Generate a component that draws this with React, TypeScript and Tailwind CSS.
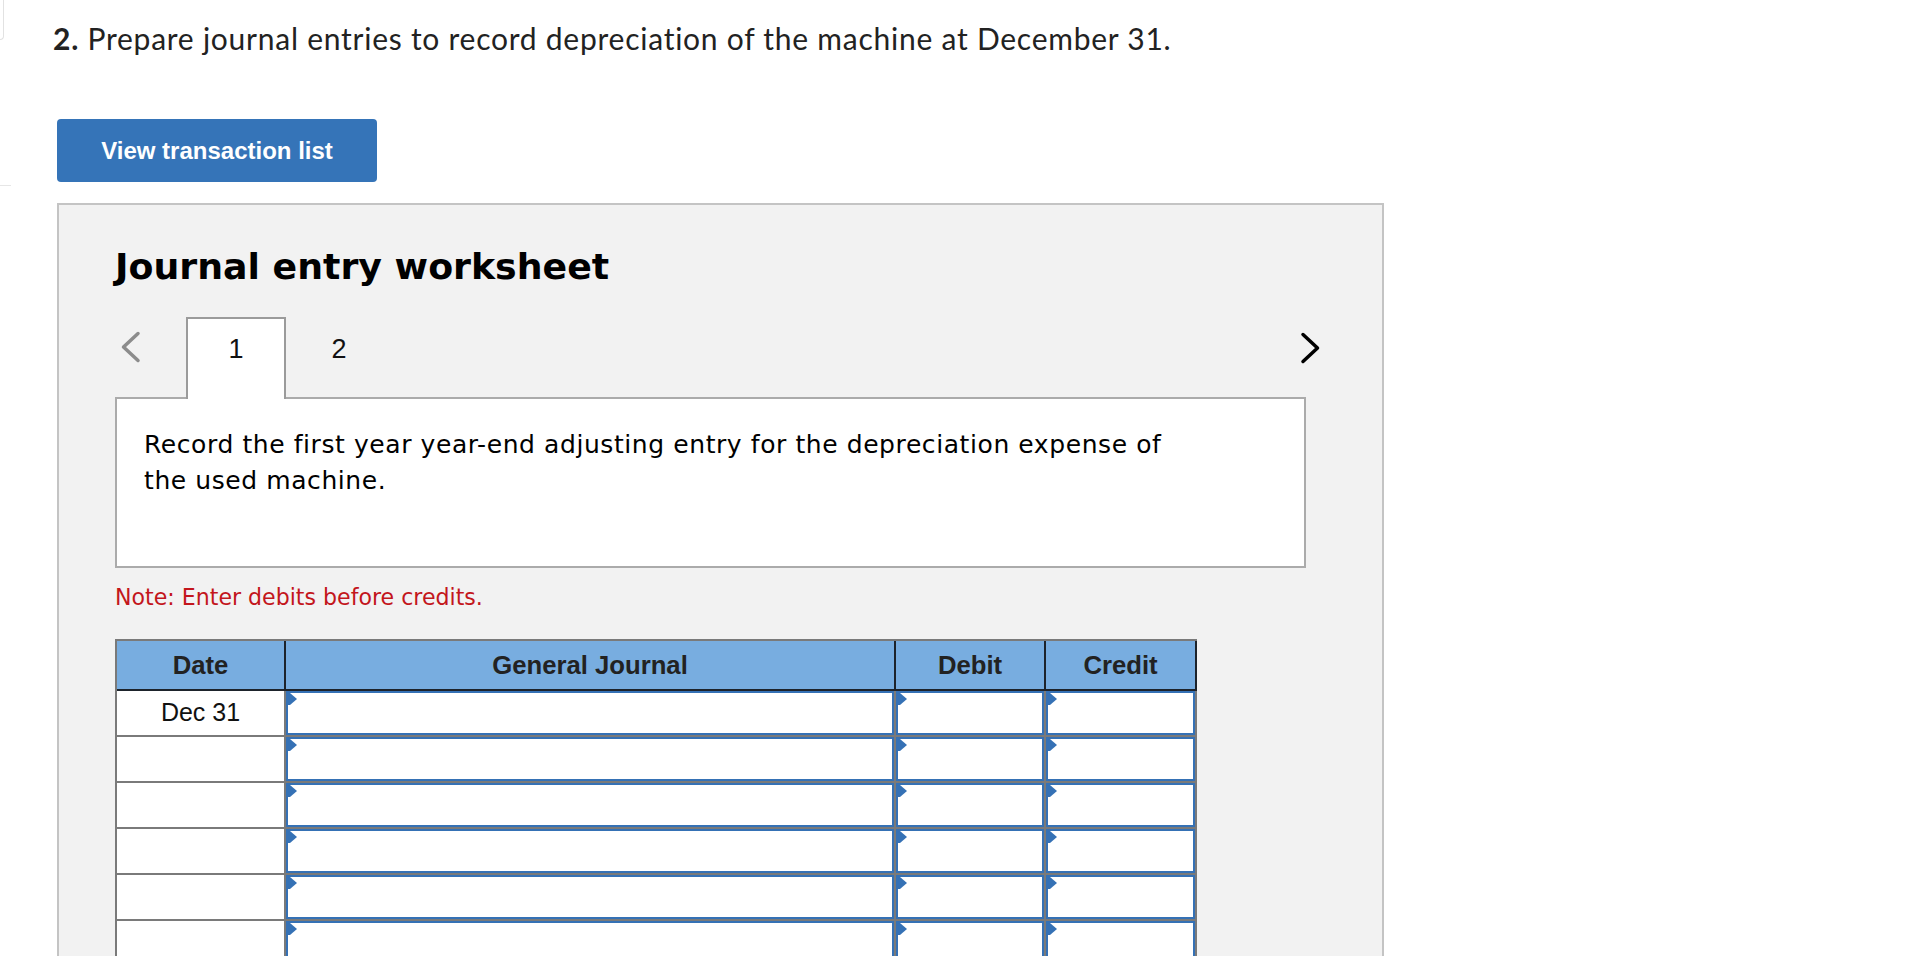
import React from "react";

const rows = ["Dec 31", "", "", "", "", "", "", ""];

function Flag() {
  return (
    <svg className="absolute left-0 top-0" width="9" height="12" viewBox="0 0 9 12">
      <polygon points="0,0 2,0 9,6 2,12 0,12" fill="#3571b5" />
    </svg>
  );
}

function EntryCell({ width }: { width: string }) {
  return (
    <div className={`${width} border-b-2 border-r-2 border-[#7a7a7a]`}>
      <div className="relative h-full border-2 border-[#3571b5] bg-white">
        <Flag />
      </div>
    </div>
  );
}

export default function App() {
  return (
    <div className="relative min-h-screen bg-white pb-10">
      {/* stray edges of the neighbouring panel */}
      <div className="absolute left-0 top-0 h-[40px] w-[4px] rounded-br-[6px] border-b border-r border-[#e2e2e2]" />
      <div className="absolute left-0 top-[185px] h-px w-[11px] bg-[#e6e6e6]" />

      <h1
        className="pl-[53px] pt-[20px] text-[30px] font-normal leading-[36px] tracking-[0.75px] text-[#222]"
        style={{ fontFamily: "Lato, sans-serif" }}
      >
        <span className="font-bold">2.</span> Prepare journal entries to record depreciation of the machine at December 31.
      </h1>

      <button
        className="ml-[57px] mt-[63px] flex h-[63px] w-[320px] items-center justify-center rounded-[4px] bg-[#3574b8] text-[24px] font-bold text-white"
        style={{ fontFamily: "'Liberation Sans', Arial, sans-serif" }}
      >
        View transaction list
      </button>

      <div className="ml-[57px] mt-[21px] w-[1327px] border-2 border-[#c4c4c4] bg-[#f2f2f2] pb-[60px] pl-[56px] pt-[41px]">
        <h2
          className="text-[36.3px] font-bold leading-[42px] text-black"
          style={{ fontFamily: "'DejaVu Sans', Verdana, sans-serif" }}
        >
          Journal entry worksheet
        </h2>

        {/* tabs */}
        <div
          className="mt-[29px] flex w-[1215px] items-start text-[27px] leading-[32px] text-[#111]"
          style={{ fontFamily: "'Liberation Sans', Arial, sans-serif" }}
        >
          <div className="w-[71px] pl-[6px] pt-[14px]">
            <svg width="20" height="32" viewBox="0 0 20 32">
              <path d="M17 2.5 L2.5 16 L17 29.5" fill="none" stroke="#8c8c8c" strokeWidth="3.5" strokeLinecap="round" strokeLinejoin="round" />
            </svg>
          </div>
          <div className="relative z-10 h-[82px] w-[100px] border-2 border-b-0 border-[#9b9b9b] bg-white pt-[14px] text-center">
            1
          </div>
          <div className="w-[106px] pt-[16px] text-center">2</div>
          <div className="flex-1" />
          <div className="mr-[10px] pt-[15px]">
            <svg width="20" height="32" viewBox="0 0 20 32">
              <path d="M3 2.5 L17.5 16 L3 29.5" fill="none" stroke="#000" strokeWidth="3.5" strokeLinecap="round" strokeLinejoin="round" />
            </svg>
          </div>
        </div>

        <div
          className="relative -mt-[2px] h-[171px] w-[1191px] border-2 border-[#ababab] bg-white pl-[27px] pt-[28px]"
          style={{ fontFamily: "'DejaVu Sans', Verdana, sans-serif" }}
        >
          <p className="w-[1035px] text-[25px] leading-[36px] tracking-[0.58px] text-black">
            Record the first year year-end adjusting entry for the depreciation expense of the used machine.
          </p>
        </div>

        <p
          className="mt-[14px] text-[22.1px] leading-[30px] text-[#c3161c]"
          style={{ fontFamily: "'DejaVu Sans', Verdana, sans-serif" }}
        >
          Note: Enter debits before credits.
        </p>

        {/* journal table */}
        <div
          className="mt-[27px] w-[1082px] border-l-2 border-t-2 border-[#7a7a7a]"
          style={{ fontFamily: "'Liberation Sans', Arial, sans-serif" }}
        >
          <div className="flex h-[50px] border-b-2 border-[#1d232b] bg-[#78ade0] text-[25.7px] font-bold text-[#222]">
            <div className="flex w-[169px] items-center justify-center border-r-2 border-[#1d232b]">Date</div>
            <div className="flex w-[610px] items-center justify-center border-r-2 border-[#1d232b]">General Journal</div>
            <div className="flex w-[150px] items-center justify-center border-r-2 border-[#1d232b]">Debit</div>
            <div className="flex w-[151px] items-center justify-center border-r-2 border-[#1d232b]">Credit</div>
          </div>
          {rows.map((date, i) => (
            <div key={i} className="flex h-[46px]">
              <div className="flex w-[169px] items-center justify-center border-b-2 border-r-2 border-[#7a7a7a] bg-white text-[25px] text-[#111]">
                {date}
              </div>
              <EntryCell width="w-[610px]" />
              <EntryCell width="w-[150px]" />
              <EntryCell width="w-[151px]" />
            </div>
          ))}
        </div>
      </div>
    </div>
  );
}
